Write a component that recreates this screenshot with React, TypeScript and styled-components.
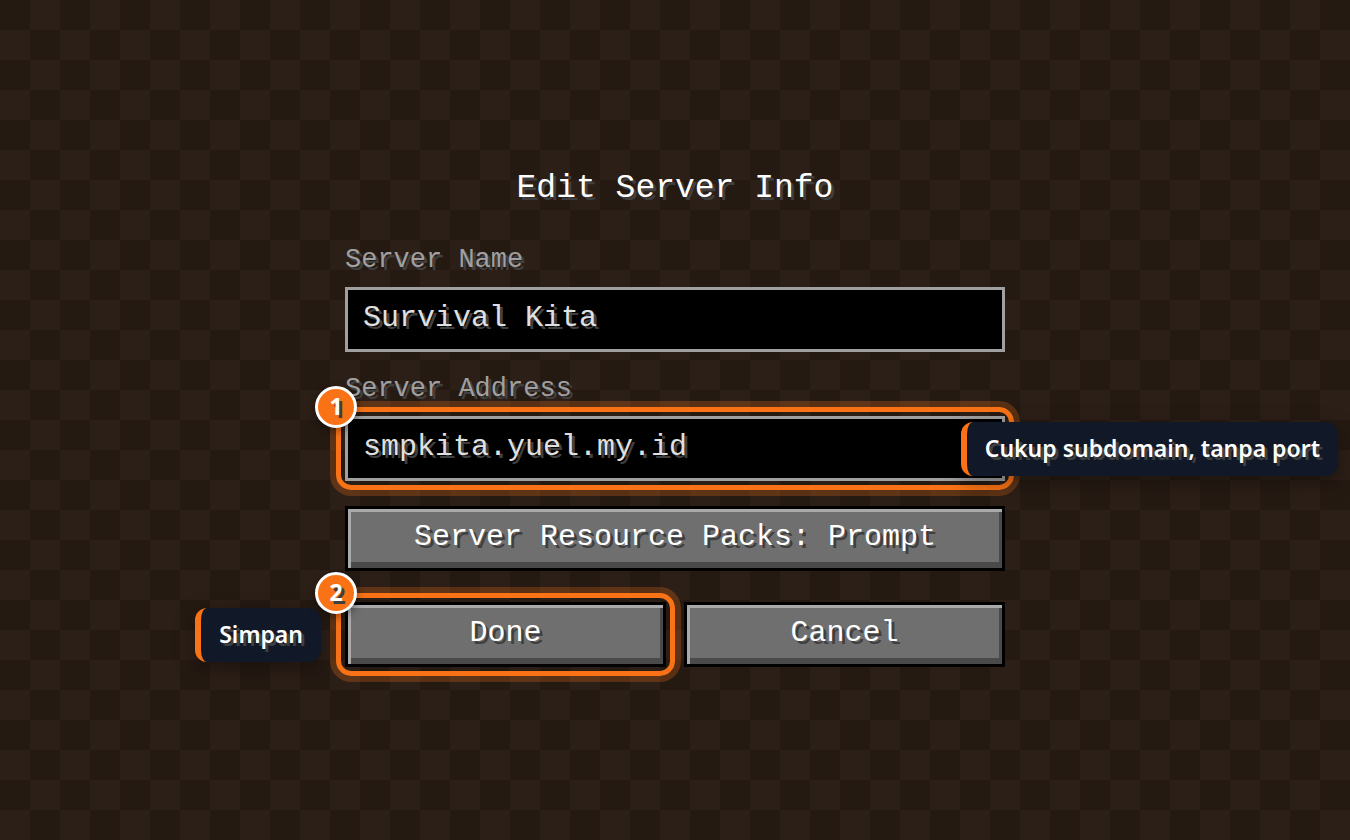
import React from "react";
import styled, { createGlobalStyle } from "styled-components";

const GlobalStyle = createGlobalStyle`
  *, *::before, *::after { box-sizing: border-box; }
  body {
    margin: 0;
    background: #2c1f17;
  }
`;

const Screen = styled.main`
  min-height: 100vh;
  display: flex;
  align-items: center;
  justify-content: center;
  overflow: hidden;
  padding: 24px 24px 26px;
  color: #fff;
  font-family: "Liberation Mono", monospace;
  text-shadow: 3px 3px 0 #3f3f3f;
  background: conic-gradient(#2c1f17 25%, #251a12 0 50%, #2c1f17 0 75%, #251a12 0) 0 0 / 60px 60px;
`;

const Form = styled.form`
  width: 100%;
  max-width: 660px;
  display: flex;
  flex-direction: column;
`;

const Title = styled.h1`
  margin: 0 0 37px;
  font-size: 33px;
  font-weight: 400;
  line-height: 36px;
  text-align: center;
`;

const Field = styled.div`
  display: flex;
  flex-direction: column;
  gap: 11px;
  margin-bottom: 21px;
`;

const Label = styled.label`
  color: #a0a0a0;
  font-size: 27px;
  line-height: 32px;
`;

const Anchor = styled.div`
  position: relative;
  display: flex;
`;

const TextInput = styled.input`
  width: 100%;
  height: 65px;
  padding: 0 15px 3px;
  border: 3px solid #a0a0a0;
  border-radius: 0;
  outline: none;
  background: #000;
  color: #e0e0e0;
  font: inherit;
  font-size: 30px;
  text-shadow: inherit;
`;

const BevelButton = styled.button`
  width: 100%;
  height: 65px;
  padding: 0 12px 3px;
  border: 3px solid #000;
  border-radius: 0;
  background: #6f6f6f;
  box-shadow: inset 3px 3px 0 #aaa, inset -3px -6px 0 #4a4a4a;
  color: #fff;
  font: inherit;
  font-size: 30px;
  text-shadow: inherit;
  cursor: pointer;
`;

const Actions = styled.div`
  display: flex;
  flex-direction: column;
  gap: 31px;
  padding-top: 4px;
`;

const ButtonPair = styled.div`
  display: grid;
  grid-template-columns: 1fr 1fr;
  gap: 18px;
`;

const Ring = styled.span`
  position: absolute;
  inset: -9px;
  z-index: 1;
  border: 5px solid #f97316;
  border-radius: 15px;
  box-shadow: 0 0 0 6px rgba(249, 115, 22, 0.25);
  pointer-events: none;
`;

const Badge = styled.span`
  position: absolute;
  top: -30px;
  left: -30px;
  z-index: 3;
  width: 42px;
  height: 42px;
  display: flex;
  align-items: center;
  justify-content: center;
  padding-bottom: 2px;
  border: 3px solid #fff;
  border-radius: 50%;
  background: #f97316;
  box-shadow: 0 3px 9px rgba(0, 0, 0, 0.4);
  font-family: "Noto Sans", sans-serif;
  font-size: 23px;
  font-weight: 700;
  line-height: 30px;
`;

const Callout = styled.span<{ $side: "left" | "right" }>`
  position: absolute;
  top: 6px;
  ${({ $side }) => ($side === "left" ? "right: calc(100% + 24px);" : "right: -333px;")}
  z-index: 2;
  padding: 11px 18px 13px;
  border-left: 6px solid #f97316;
  border-radius: 12px;
  background: #111827;
  box-shadow: 0 6px 21px rgba(0, 0, 0, 0.35);
  font-family: "Noto Sans", sans-serif;
  font-size: 23px;
  font-weight: 600;
  line-height: 30px;
  white-space: nowrap;
`;

interface MarkProps {
  step: number;
  side: "left" | "right";
  note: string;
}

function Mark({ step, side, note }: MarkProps) {
  return (
    <>
      <Ring />
      <Callout $side={side}>{note}</Callout>
      <Badge>{step}</Badge>
    </>
  );
}

export default function App() {
  return (
    <>
      <GlobalStyle />
      <Screen>
        <Form onSubmit={(event) => event.preventDefault()}>
          <Title>Edit Server Info</Title>
          <Field>
            <Label htmlFor="server-name">Server Name</Label>
            <TextInput id="server-name" defaultValue="Survival Kita" spellCheck={false} />
          </Field>
          <Field>
            <Label htmlFor="server-address">Server Address</Label>
            <Anchor>
              <TextInput id="server-address" defaultValue="smpkita.yuel.my.id" spellCheck={false} />
              <Mark step={1} side="right" note="Cukup subdomain, tanpa port" />
            </Anchor>
          </Field>
          <Actions>
            <BevelButton type="button">Server Resource Packs: Prompt</BevelButton>
            <ButtonPair>
              <Anchor>
                <BevelButton type="submit">Done</BevelButton>
                <Mark step={2} side="left" note="Simpan" />
              </Anchor>
              <BevelButton type="button">Cancel</BevelButton>
            </ButtonPair>
          </Actions>
        </Form>
      </Screen>
    </>
  );
}
